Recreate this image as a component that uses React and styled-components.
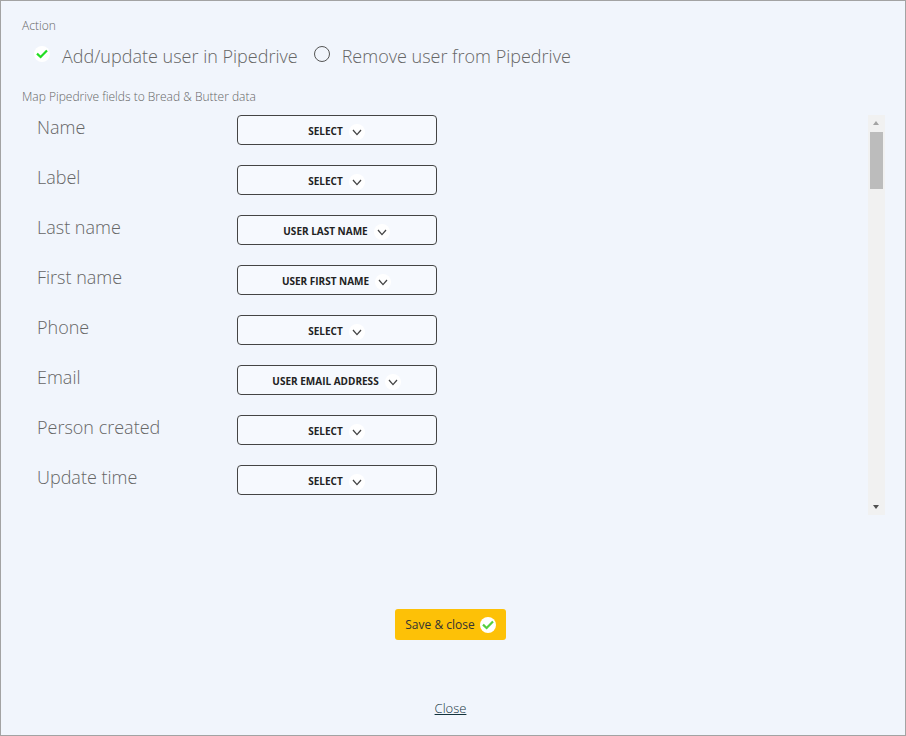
import React from 'react';
import styled, { createGlobalStyle } from 'styled-components';

const GlobalStyle = createGlobalStyle`
  html, body {
    margin: 0;
    padding: 0;
    background: #f1f5fc;
    font-family: "Open Sans", "Liberation Sans", sans-serif;
  }
  * { box-sizing: border-box; }
`;

const fields = [
  { name: 'Name', value: 'SELECT' },
  { name: 'Label', value: 'SELECT' },
  { name: 'Last name', value: 'USER LAST NAME' },
  { name: 'First name', value: 'USER FIRST NAME' },
  { name: 'Phone', value: 'SELECT' },
  { name: 'Email', value: 'USER EMAIL ADDRESS' },
  { name: 'Person created', value: 'SELECT' },
  { name: 'Update time', value: 'SELECT' },
];

const Chevron = () => (
  <ChevronCircle>
    <svg width="10" height="7" viewBox="0 0 10 7" fill="none">
      <path d="M1 1l4 4.6L9 1" stroke="#444" strokeWidth="1.3" />
    </svg>
  </ChevronCircle>
);

const Check = ({ color }) => (
  <CheckCircle>
    <svg width="12" height="10" viewBox="0 0 12 10" fill="none">
      <path d="M1 4.6l3.6 3.4L11 1.4" stroke={color} strokeWidth="2.2" />
    </svg>
  </CheckCircle>
);

const App = () => {
  return (
    <Modal>
      <GlobalStyle />
      <SmallLabel>Action</SmallLabel>
      <RadioRow>
        <RadioOption>
          <Check color="#22dd22" />
          <RadioText>Add/update user in Pipedrive</RadioText>
        </RadioOption>
        <RadioOption second>
          <EmptyRadio />
          <RadioText>Remove user from Pipedrive</RadioText>
        </RadioOption>
      </RadioRow>
      <MapLabel>Map Pipedrive fields to Bread &amp; Butter data</MapLabel>
      <MapArea>
        <FieldList>
          {fields.map((field) => (
            <FieldRow key={field.name}>
              <FieldName>{field.name}</FieldName>
              <SelectButton>
                {field.value}
                <Chevron />
              </SelectButton>
            </FieldRow>
          ))}
        </FieldList>
        <Scrollbar>
          <ArrowUp />
          <Thumb />
          <ArrowDown />
        </Scrollbar>
      </MapArea>
      <Footer>
        <SaveButton>
          Save &amp; close
          <Check color="#55d040" />
        </SaveButton>
        <CloseLink>Close</CloseLink>
      </Footer>
    </Modal>
  );
};

const Modal = styled.div`
  width: 906px;
  height: 736px;
  border: 1px solid #a3a3a3;
  background: #f1f5fc;
  padding: 17px 20px 0 21px;
  display: flex;
  flex-direction: column;
  overflow: hidden;
`;

const SmallLabel = styled.div`
  font-size: 12px;
  font-weight: 300;
  line-height: 15px;
  color: #666;
`;

const RadioRow = styled.div`
  display: flex;
  align-items: center;
  margin-top: 8px;
  padding-left: 12px;
  height: 30px;
`;

const RadioOption = styled.div`
  display: flex;
  align-items: center;
  gap: 12px;
  margin-left: ${(props) => (props.second ? '16px' : '0')};
`;

const RadioText = styled.span`
  font-size: 18px;
  font-weight: 300;
  color: #666;
  line-height: 30px;
`;

const CheckCircle = styled.span`
  flex: none;
  width: 16px;
  height: 16px;
  border-radius: 50%;
  background: #fff;
  display: inline-flex;
  align-items: center;
  justify-content: center;
  margin-top: -5px;
`;

const EmptyRadio = styled.span`
  width: 16px;
  height: 16px;
  border-radius: 50%;
  border: 1px solid #555;
  margin-top: -5px;
`;

const MapLabel = styled(SmallLabel)`
  margin-top: 18px;
`;

const MapArea = styled.div`
  display: flex;
  justify-content: space-between;
  margin-top: 11px;
  height: 400px;
`;

const FieldList = styled.div`
  display: flex;
  flex-direction: column;
  gap: 20px;
  padding-left: 15px;
`;

const FieldRow = styled.div`
  display: flex;
  height: 30px;
`;

const FieldName = styled.div`
  width: 200px;
  font-size: 18px;
  font-weight: 300;
  color: #666;
  line-height: 25px;
`;

const SelectButton = styled.div`
  width: 200px;
  height: 30px;
  border: 1px solid #444;
  border-radius: 4px;
  background: #f6f9fe;
  padding: 2px 1px 0 0;
  display: flex;
  align-items: center;
  justify-content: center;
  font-size: 10px;
  font-weight: 700;
  color: #222;
`;

const ChevronCircle = styled.span`
  width: 16px;
  height: 16px;
  margin-left: 6px;
  margin-top: 2px;
  border-radius: 50%;
  background: #fff;
  display: inline-flex;
  align-items: center;
  justify-content: center;
`;

const Scrollbar = styled.div`
  width: 17px;
  height: 400px;
  background: #f1f1f1;
  position: relative;
  padding: 17px 2px 0;
`;

const Thumb = styled.div`
  height: 57px;
  width: 13px;
  background: #bcbcbc;
`;

const ArrowUp = styled.div`
  position: absolute;
  top: 6px;
  left: 5px;
  border-left: 3.5px solid transparent;
  border-right: 3.5px solid transparent;
  border-bottom: 4px solid #a3a3a3;
`;

const ArrowDown = styled.div`
  position: absolute;
  bottom: 6px;
  left: 5px;
  border-left: 3.5px solid transparent;
  border-right: 3.5px solid transparent;
  border-top: 4px solid #505050;
`;

const Footer = styled.div`
  display: flex;
  flex-direction: column;
  align-items: center;
  margin-top: 94px;
  padding-right: 6px;
`;

const SaveButton = styled.div`
  height: 31px;
  width: 111px;
  background: #fdc107;
  border-radius: 3px;
  display: flex;
  align-items: center;
  justify-content: center;
  gap: 5px;
  font-size: 12px;
  color: #333;
  & > span { margin-top: 0; }
`;

const CloseLink = styled.a`
  margin-top: 59px;
  font-size: 13px;
  font-weight: 300;
  line-height: 18px;
  color: #12323c;
  text-decoration: underline;
`;

export default App;
